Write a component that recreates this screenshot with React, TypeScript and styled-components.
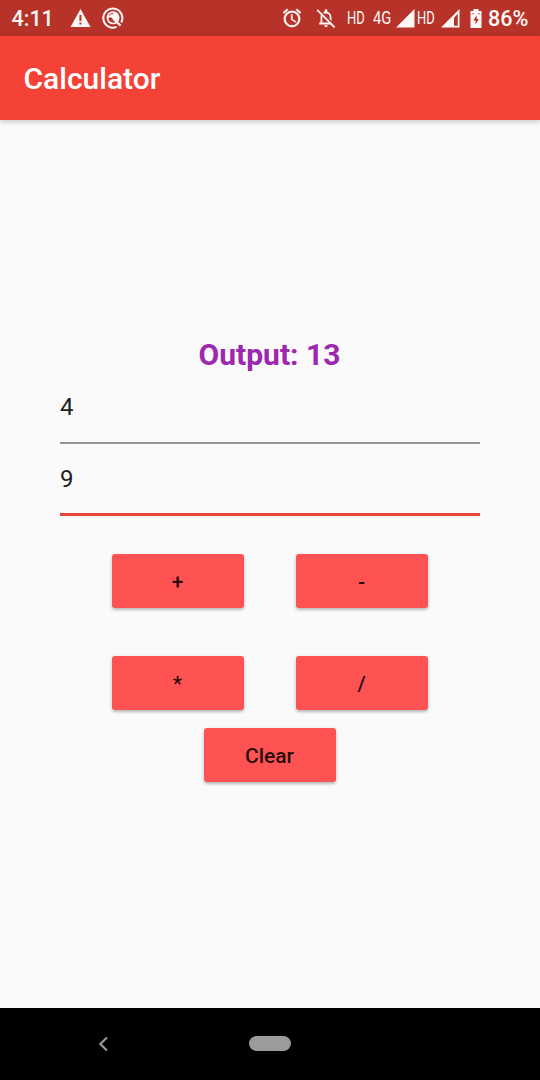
import React from 'react';
import styled, { createGlobalStyle } from 'styled-components';

const GlobalStyle = createGlobalStyle`
  * { box-sizing: border-box; }
  body { margin: 0; background: #fafafa; }
`;

const Screen = styled.div`
  width: 540px;
  height: 1080px;
  display: flex;
  flex-direction: column;
  overflow: hidden;
  background: #fafafa;
  font-family: Roboto, sans-serif;
`;

const StatusBar = styled.header`
  height: 36px;
  flex: none;
  display: flex;
  align-items: center;
  justify-content: space-between;
  padding: 0 12px 0 11.5px;
  background: #b73229;
  color: #fff8f6;
`;

const StatusGroup = styled.div`
  display: flex;
  align-items: center;
  height: 36px;
`;

const StatusText = styled.span<{ $width: number; $gap?: number }>`
  width: ${(p) => p.$width}px;
  margin-left: ${(p) => p.$gap ?? 0}px;
  font-size: 21.5px;
  font-weight: 500;
  line-height: 36px;
  padding-top: 1px;
  white-space: nowrap;
`;

const NetworkLabel = styled.span<{ $width: number; $gap?: number; $scale: number }>`
  width: ${(p) => p.$width}px;
  margin-left: ${(p) => p.$gap ?? 0}px;
  font-size: 17.5px;
  line-height: 36px;
  white-space: nowrap;
  transform: scaleX(${(p) => p.$scale});
  transform-origin: left center;
`;

const Glyph = styled.svg<{ $gap?: number }>`
  display: block;
  flex: none;
  margin-left: ${(p) => p.$gap ?? 0}px;
  overflow: visible;
`;

const AppBar = styled.div`
  height: 84px;
  flex: none;
  display: flex;
  align-items: center;
  padding: 1px 24px 0 23.5px;
  background: #f44336;
  box-shadow: 0 2px 5px rgba(0, 0, 0, 0.14), 0 1px 8px rgba(0, 0, 0, 0.08);
`;

const Title = styled.h1`
  margin: 0;
  color: #fff;
  font-size: 30px;
  font-weight: 500;
  line-height: 36px;
`;

const Body = styled.main`
  flex: 1;
  display: flex;
  flex-direction: column;
  justify-content: center;
  padding: 0 60px;
`;

const Output = styled.div`
  height: 35px;
  padding-right: 1px;
  line-height: 35px;
  text-align: center;
  font-size: 30px;
  font-weight: 700;
  color: #9c27b0;
`;

const Field = styled.div<{ $focused?: boolean }>`
  height: 72px;
  display: flex;
  flex-direction: column;
  justify-content: space-between;
  &::after {
    content: '';
    height: ${(p) => (p.$focused ? 3 : 2)}px;
    background: ${(p) => (p.$focused ? '#ea4339' : '#949494')};
  }
`;

const Value = styled.div`
  padding-top: 21px;
  font-size: 24px;
  line-height: 28px;
  color: #212121;
`;

const Keys = styled.div`
  padding-top: 29px;
`;

const KeyRow = styled.div`
  display: flex;
  justify-content: space-evenly;
  & + & {
    margin-top: 30px;
  }
  &:last-child {
    margin-top: 0;
  }
`;

const Key = styled.button`
  width: 132px;
  height: 54px;
  margin: 9px 0;
  padding: 1px 1px 0 0;
  border: 0;
  border-radius: 3px;
  background: #ff5252;
  color: rgba(0, 0, 0, 0.87);
  font: 500 21px/24px Roboto, sans-serif;
  box-shadow: 0 2px 3px rgba(0, 0, 0, 0.22), 0 1px 5px rgba(0, 0, 0, 0.08);
`;

const NavBar = styled.nav`
  height: 72px;
  flex: none;
  display: flex;
  align-items: center;
  padding: 0 0 1px 98px;
  background: #000;
`;

const HomePill = styled.div`
  width: 42px;
  height: 15px;
  margin-left: 140px;
  border-radius: 8px;
  background: #9b9b9b;
`;

const ink = '#fff8f6';

const Warning = () => (
  <Glyph width="21" height="18" viewBox="0 0 21 18" $gap={16}>
    <path d="M10.5 0 20.5 18H.5Z" fill={ink} />
    <path d="M9.4 6h2.1v6H9.4zM9.4 13.4h2.1v2H9.4z" fill="#b73229" />
  </Glyph>
);

const QAssistant = () => (
  <Glyph width="22" height="22" viewBox="0 0 22 22" $gap={11} fill="none" stroke={ink}>
    <path d="M14.6 19.8A9.5 9.5 0 1 1 19.2 15.6" strokeWidth="2" />
    <circle cx="11" cy="10.8" r="6.5" fill={ink} stroke="none" />
    <path d="M6.3 11.4Q8 9.4 9.6 10.8L13.8 15Q11.5 16.3 9 15 6.5 13.6 6.3 11.4Z" fill="#b73229" stroke="none" />
    <path d="M6.8 8.6Q8.5 6.4 11.3 6.6" stroke="#b73229" strokeWidth="1" />
    <path d="m11.2 11.8 7.4 6.8" strokeWidth="2.2" />
  </Glyph>
);

const Alarm = () => (
  <Glyph width="22" height="22" viewBox="0 0 24 24" fill={ink} stroke={ink} strokeWidth=".3">
    <path d="m22 5.72-4.6-3.86-1.29 1.53 4.6 3.86L22 5.72zM7.88 3.39 6.6 1.86 2 5.71l1.29 1.53 4.59-3.85zM12.5 8H11v6l4.75 2.85.75-1.23-4-2.37V8zM12 4a9 9 0 1 0 0 18 9 9 0 0 0 0-18zm0 16a7 7 0 1 1 0-14 7 7 0 0 1 0 14z" />
  </Glyph>
);

const BellOff = () => (
  <Glyph width="22" height="22" viewBox="0 0 24 24" $gap={12} fill={ink}>
    <path
      d="M7 17.5V11a5 5 0 0 1 10 0v6.5M4.5 18h15"
      fill="none"
      stroke={ink}
      strokeWidth="2"
    />
    <path d="M10.5 6V4a1.5 1.5 0 0 1 3 0v2zM10 20h4a2 2 0 0 1-4 0z" />
    <path d="M3.6 2.2 22 20.6" stroke="#b73229" strokeWidth="2" />
    <path d="M2.4 3.2 21.4 22.2" stroke={ink} strokeWidth="2" />
  </Glyph>
);

const SignalFull = () => (
  <Glyph width="19" height="19" viewBox="0 0 19 19" $gap={4}>
    <path d="M0 18.5 18.5 0v18.5z" fill={ink} />
  </Glyph>
);

const SignalPartial = () => (
  <Glyph width="19" height="19" viewBox="0 0 19 19" $gap={6}>
    <path d="M0 18.5 18.5 0v18.5z" fill={ink} />
    <path d="M13 8.7 16.8 4.8V16.8H13z" fill="#b73229" />
  </Glyph>
);

const Battery = () => (
  <Glyph width="12" height="19" viewBox="0 0 12 19" $gap={10}>
    <path d="M3.5 0h5v2H11.5v17H.5V2h3z" fill={ink} />
    <path d="M1.8 4.8h2.4M7.8 4.8h2.4" stroke="#b73229" strokeWidth="1" opacity=".7" />
    <path d="M6.7 6.3 3.3 11.5h2.3v4l3.2-5.5H6.7z" fill="#b73229" />
  </Glyph>
);

const rows = [
  ['+', '-'],
  ['*', '/'],
  ['Clear'],
];

export default function App() {
  return (
    <Screen>
      <GlobalStyle />
      <StatusBar>
        <StatusGroup>
          <StatusText $width={42}>4:11</StatusText>
          <Warning />
          <QAssistant />
        </StatusGroup>
        <StatusGroup>
          <Alarm />
          <BellOff />
          <NetworkLabel $width={18} $gap={9.5} $scale={0.74}>HD</NetworkLabel>
          <NetworkLabel $width={19} $gap={8} $scale={0.84}>4G</NetworkLabel>
          <SignalFull />
          <NetworkLabel $width={18} $gap={2.5} $scale={0.74}>HD</NetworkLabel>
          <SignalPartial />
          <Battery />
          <StatusText $width={40} $gap={6}>86%</StatusText>
        </StatusGroup>
      </StatusBar>
      <AppBar>
        <Title>Calculator</Title>
      </AppBar>
      <Body>
        <Output>Output: 13</Output>
        <Field>
          <Value>4</Value>
        </Field>
        <Field $focused>
          <Value>9</Value>
        </Field>
        <Keys>
          {rows.map((row) => (
            <KeyRow key={row[0]}>
              {row.map((label) => (
                <Key key={label}>{label}</Key>
              ))}
            </KeyRow>
          ))}
        </Keys>
      </Body>
      <NavBar>
        <Glyph width="11" height="16" viewBox="0 0 11 16">
          <path d="M9 1.5 2.3 8 9 14.5" fill="none" stroke="#9b9b9b" strokeWidth="2.1" />
        </Glyph>
        <HomePill />
      </NavBar>
    </Screen>
  );
}
